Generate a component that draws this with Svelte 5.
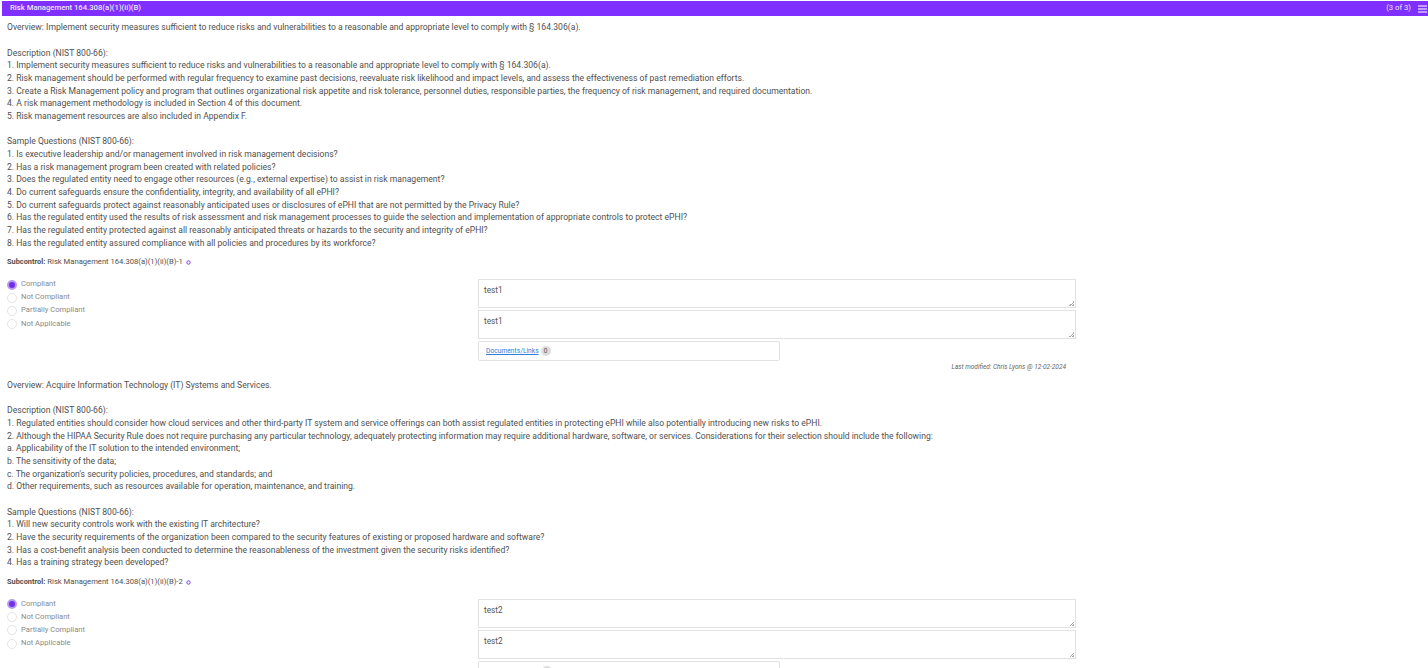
<script>
  const sections = [
    {
      id: 1,
      blocks: [
        ['Overview: Implement security measures sufficient to reduce risks and vulnerabilities to a reasonable and appropriate level to comply with § 164.306(a).'],
        [
          'Description (NIST 800-66):',
          '1. Implement security measures sufficient to reduce risks and vulnerabilities to a reasonable and appropriate level to comply with § 164.306(a).',
          '2. Risk management should be performed with regular frequency to examine past decisions, reevaluate risk likelihood and impact levels, and assess the effectiveness of past remediation efforts.',
          '3. Create a Risk Management policy and program that outlines organizational risk appetite and risk tolerance, personnel duties, responsible parties, the frequency of risk management, and required documentation.',
          '4. A risk management methodology is included in Section 4 of this document.',
          '5. Risk management resources are also included in Appendix F.',
        ],
        [
          'Sample Questions (NIST 800-66):',
          '1. Is executive leadership and/or management involved in risk management decisions?',
          '2. Has a risk management program been created with related policies?',
          '3. Does the regulated entity need to engage other resources (e.g., external expertise) to assist in risk management?',
          '4. Do current safeguards ensure the confidentiality, integrity, and availability of all ePHI?',
          '5. Do current safeguards protect against reasonably anticipated uses or disclosures of ePHI that are not permitted by the Privacy Rule?',
          '6. Has the regulated entity used the results of risk assessment and risk management processes to guide the selection and implementation of appropriate controls to protect ePHI?',
          '7. Has the regulated entity protected against all reasonably anticipated threats or hazards to the security and integrity of ePHI?',
          '8. Has the regulated entity assured compliance with all policies and procedures by its workforce?',
        ],
      ],
    },
    {
      id: 2,
      blocks: [
        ['Overview: Acquire Information Technology (IT) Systems and Services.'],
        [
          'Description (NIST 800-66):',
          '1. Regulated entities should consider how cloud services and other third-party IT system and service offerings can both assist regulated entities in protecting ePHI while also potentially introducing new risks to ePHI.',
          '2. Although the HIPAA Security Rule does not require purchasing any particular technology, adequately protecting information may require additional hardware, software, or services. Considerations for their selection should include the following:',
          'a. Applicability of the IT solution to the intended environment;',
          'b. The sensitivity of the data;',
          "c. The organization's security policies, procedures, and standards; and",
          'd. Other requirements, such as resources available for operation, maintenance, and training.',
        ],
        [
          'Sample Questions (NIST 800-66):',
          '1. Will new security controls work with the existing IT architecture?',
          '2. Have the security requirements of the organization been compared to the security features of existing or proposed hardware and software?',
          '3. Has a cost-benefit analysis been conducted to determine the reasonableness of the investment given the security risks identified?',
          '4. Has a training strategy been developed?',
        ],
      ],
    },
  ]
  const options = ['Compliant', 'Not Compliant', 'Partially Compliant', 'Not Applicable']
</script>

<div class="panel">
  <header class="bar">
    <span>Risk Management 164.308(a)(1)(ii)(B)</span>
    <span class="right">
      (3 of 3)
      <svg width="9" height="8" viewBox="0 0 9 8"><path d="M0 1h9M0 4h9M0 7h9" stroke="#d9c4ff" stroke-width="1.4" /></svg>
    </span>
  </header>

  {#each sections as s}
    <section class="control">
      <div class="text">
        {#each s.blocks as block}
          <p>
            {#each block as line}
              <span class="line">{line}</span>
            {/each}
          </p>
        {/each}
      </div>

      <div class="sub">
        <b>Subcontrol:</b> <span>Risk Management 164.308(a)(1)(ii)(B)-{s.id}</span>
        <svg width="5" height="5" viewBox="0 0 5 5"><circle cx="2.5" cy="2.5" r="1.7" fill="none" stroke="#7c3aed" stroke-width="1" /></svg>
      </div>

      <div class="form">
        <div class="radios">
          {#each options as o, i}
            <div class="radio">
              <span class="dot" class:on={i === 0}></span>
              <span>{o}</span>
            </div>
          {/each}
        </div>
        <div class="fields">
          <div class="ta">test{s.id}<i></i></div>
          <div class="ta">test{s.id}<i></i></div>
          {#if s.id === 1}
            <div class="docs">
              <a href="#docs">Documents/Links</a>
              <span class="count">0</span>
            </div>
            <div class="mod">Last modified: Chris Lyons @ 12-02-2024</div>
          {:else}
            <div class="docs">
              <span class="count late"></span>
            </div>
          {/if}
        </div>
      </div>
    </section>
  {/each}
</div>

<style>
  :global(body) {
    margin: 0;
    background: #fff;
    overflow: hidden;
  }

  .panel {
    height: 668px;
    overflow: hidden;
    padding-top: 1px;
    box-sizing: border-box;
    margin-left: 2px;
    font-family: Roboto, 'Liberation Sans', sans-serif;
    font-size: 8.6px;
    line-height: 12.65px;
    color: #505050;
  }

  .bar {
    height: 15px;
    display: flex;
    justify-content: space-between;
    align-items: center;
    padding: 0 1px 0 8px;
    background: #7f2fff;
    color: #eee6ff;
    font-size: 7.7px;
    font-weight: 500;
  }

  .right {
    display: flex;
    align-items: center;
    gap: 7px;
    font-weight: 400;
  }

  .control {
    padding-left: 5px;
  }

  .text {
    padding-top: 5.4px;
  }

  p {
    margin: 0 0 12.65px;
  }

  p:last-child {
    margin-bottom: 7.2px;
  }

  .line {
    display: block;
    white-space: nowrap;
  }

  .sub {
    display: flex;
    align-items: center;
    gap: 2px;
    font-size: 7.65px;
  }

  .sub b {
    font-size: 7.4px;
    font-weight: 700;
  }

  .sub svg {
    margin-left: 1px;
  }

  .form {
    display: flex;
    margin-top: 10px;
  }

  .radios {
    width: 471px;
    margin-top: -1px;
    font-size: 7.6px;
    color: #8a8a8a;
  }

  .radio {
    display: flex;
    align-items: center;
    gap: 4px;
    height: 13.1px;
  }

  .dot {
    width: 8px;
    height: 8px;
    border: 1px solid #e4e4e4;
    border-radius: 50%;
  }

  .dot.on {
    width: 6px;
    height: 6px;
    background: #6f2fe6;
    border: 2px solid #b79af2;
  }

  .fields {
    width: 598px;
    color: #555;
    font-size: 8.2px;
  }

  .ta {
    position: relative;
    height: 29px;
    box-sizing: border-box;
    border: 1px solid #e2e2e2;
    margin-bottom: 2px;
    padding: 4px 5px;
  }

  .ta i {
    position: absolute;
    right: 1px;
    bottom: 1px;
    width: 5px;
    height: 5px;
    background: linear-gradient(135deg, transparent 50%, #aaa 50%, #aaa 62%, transparent 62%, transparent 78%, #aaa 78%);
  }

  .docs {
    display: flex;
    align-items: center;
    gap: 2px;
    width: 302px;
    height: 20px;
    box-sizing: border-box;
    border: 1px solid #e2e2e2;
    border-radius: 2px;
    padding-left: 7px;
  }

  .docs a {
    color: #2f80d8;
    font-size: 6.7px;
  }

  .count {
    width: 10px;
    height: 10px;
    border-radius: 50%;
    background: #ddd;
    font-size: 6.5px;
    line-height: 10px;
    text-align: center;
  }

  .count.late {
    margin-left: 56px;
  }

  .mod {
    text-align: right;
    padding-right: 10px;
    font-size: 6.5px;
    font-style: italic;
    color: #666;
  }
</style>
